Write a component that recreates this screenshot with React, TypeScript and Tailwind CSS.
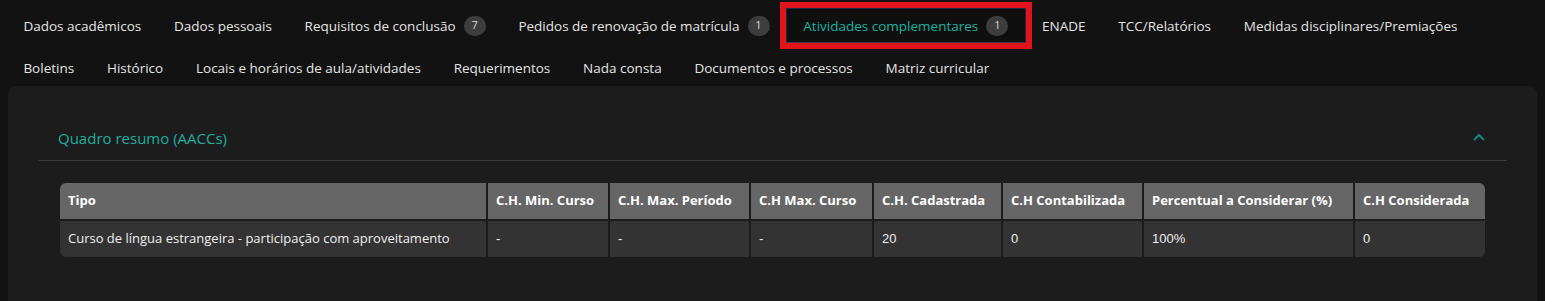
import React from 'react'

type Tab = { label: string; badge?: number; active?: boolean }

const rowOne: Tab[] = [
  { label: 'Dados acadêmicos' },
  { label: 'Dados pessoais' },
  { label: 'Requisitos de conclusão', badge: 7 },
  { label: 'Pedidos de renovação de matrícula', badge: 1 },
  { label: 'Atividades complementares', badge: 1, active: true },
  { label: 'ENADE' },
  { label: 'TCC/Relatórios' },
  { label: 'Medidas disciplinares/Premiações' },
]

const rowTwo: Tab[] = [
  { label: 'Boletins' },
  { label: 'Histórico' },
  { label: 'Locais e horários de aula/atividades' },
  { label: 'Requerimentos' },
  { label: 'Nada consta' },
  { label: 'Documentos e processos' },
  { label: 'Matriz curricular' },
]

const headers = [
  'Tipo',
  'C.H. Min. Curso',
  'C.H. Max. Período',
  'C.H Max. Curso',
  'C.H. Cadastrada',
  'C.H Contabilizada',
  'Percentual a Considerar (%)',
  'C.H Considerada',
]

const row = ['Curso de língua estrangeira - participação com aproveitamento', '-', '-', '-', '20', '0', '100%', '0']

function TabButton({ tab }: { tab: Tab }) {
  return (
    <button
      type="button"
      className={
        tab.active
          ? 'h-[35px] flex items-center gap-2 px-[16.4px] border border-[#1c2b4a] border-b-[#3a3d44] bg-[#0f0f10] text-[#1bb3a0] outline-[6px] outline-solid outline-[#e3131c]'
          : 'h-[35px] flex items-center gap-2 px-[16.4px] text-[#e4e4e4]'
      }
    >
      <span className="text-[13.5px] leading-5 whitespace-nowrap">{tab.label}</span>
      {tab.badge !== undefined && (
        <span className="w-[22px] h-[20px] rounded-full bg-[#3d3d3d] text-[#d8d8d8] text-[11px] flex items-center justify-center">
          {tab.badge}
        </span>
      )}
    </button>
  )
}

export default function App() {
  return (
    <div className="min-h-[301px] bg-[#121212] font-['Open_Sans',sans-serif] pt-2 px-2 overflow-hidden">
      <div className="flex flex-col gap-[7px] -ml-px">
        <div className="flex">
          {rowOne.map((t) => (
            <TabButton key={t.label} tab={t} />
          ))}
        </div>
        <div className="flex">
          {rowTwo.map((t) => (
            <TabButton key={t.label} tab={t} />
          ))}
        </div>
      </div>

      <div className="mt-px bg-[#1c1c1c] rounded-t-lg px-[30px] pt-[33px] pb-12">
        <div className="flex items-center justify-between h-[42px] pb-[3px] px-5 border-b border-[#3a3a3a]">
          <span className="text-[15px] text-[#1fae9d]">Quadro resumo (AACCs)</span>
          <svg width="12" height="8" viewBox="0 0 12 8" className="mr-[2px] -mt-[3px]">
            <polyline points="1,7 6,2 11,7" fill="none" stroke="#10877a" strokeWidth="2" />
          </svg>
        </div>

        <div className="mx-[22px] mt-[22px] grid grid-cols-[426px_120px_139px_121px_127px_139px_209px_131px] gap-[2px] rounded-md overflow-hidden">
          {headers.map((h) => (
            <div key={h} className="h-9 bg-[#666666] px-2 flex items-center text-[13px] font-bold text-white whitespace-nowrap">
              {h}
            </div>
          ))}
          {row.map((c, i) => (
            <div
              key={i}
              className={
                i === 0
                  ? 'h-9 bg-[#333333] px-2 flex items-center text-[13px] text-[#f0f0f0] whitespace-nowrap'
                  : "h-9 bg-[#333333] px-2 flex items-center text-[13px] text-[#f0f0f0] font-['Liberation_Sans',sans-serif]"
              }
            >
              {c}
            </div>
          ))}
        </div>
      </div>
    </div>
  )
}
